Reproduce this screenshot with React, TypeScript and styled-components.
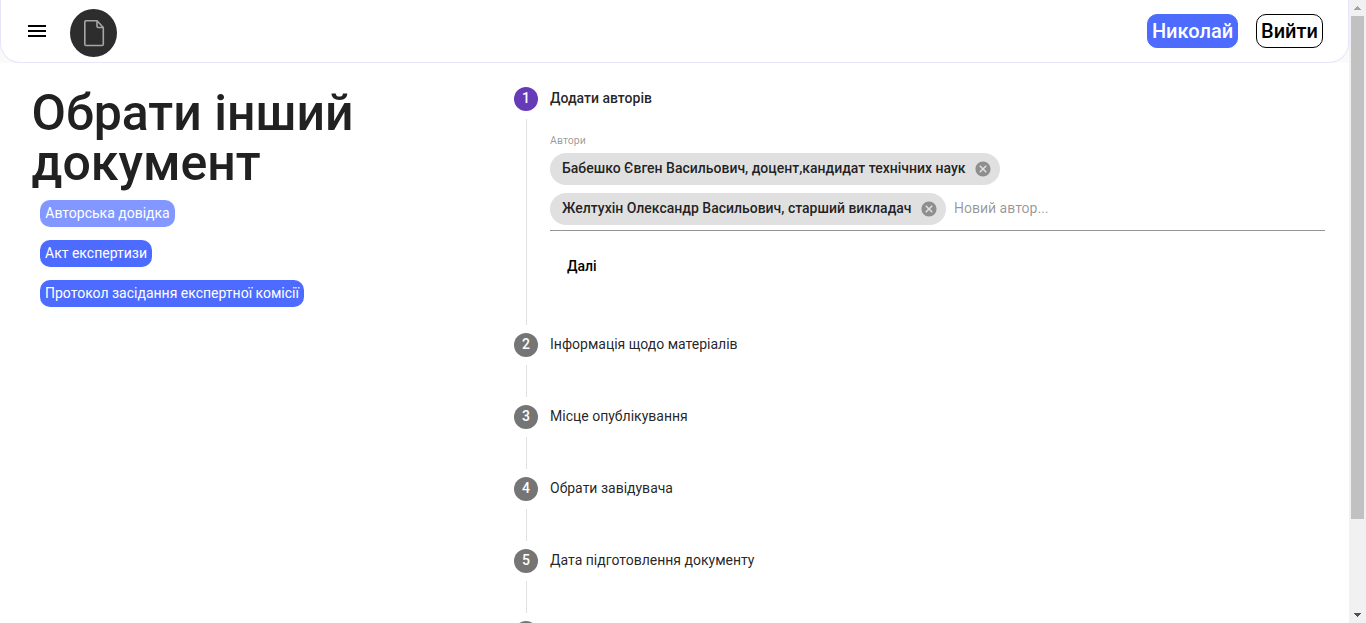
import React from "react";
import styled, { createGlobalStyle } from "styled-components";

const GlobalStyle = createGlobalStyle`
  * { box-sizing: border-box; }
  body {
    margin: 0;
    background: #fff;
    color: rgba(0, 0, 0, 0.87);
    font-family: Roboto, "Liberation Sans", sans-serif;
    overflow: hidden;
  }
  button { font-family: inherit; cursor: pointer; }
`;

const Shell = styled.div`
  display: flex;
  height: 623px;
  overflow: hidden;
`;

const Page = styled.div`
  flex: 1;
  min-width: 0;
`;

const HeaderBand = styled.div`
  height: 63px;
  background: #fafafa;
`;

const Header = styled.header`
  display: flex;
  align-items: flex-start;
  height: 63px;
  padding: 0 25px 0 24px;
  background: #fff;
  border: 1px solid #e6e6fa;
  border-top: 0;
  border-radius: 0 0 20px 20px;
`;

const MenuIcon = styled.svg`
  width: 24px;
  height: 24px;
  margin: 19px 21px 0 0;
`;

const Logo = styled.svg`
  width: 47px;
  height: 48px;
  margin-top: 9px;
`;

const Actions = styled.div`
  display: flex;
  gap: 18px;
  margin: 14px 0 0 auto;
`;

const HeaderButton = styled.button<{ $filled?: boolean; $width: number }>`
  width: ${(p) => p.$width}px;
  height: 34px;
  padding: 0;
  border: 1px solid ${(p) => (p.$filled ? "#4d6bff" : "#000")};
  border-radius: 10px;
  background: ${(p) => (p.$filled ? "#4d6bff" : "#fff")};
  color: ${(p) => (p.$filled ? "#fff" : "#000")};
  font-size: 20px;
  font-weight: 500;
  line-height: 32px;
  white-space: nowrap;
`;

const Content = styled.main`
  display: flex;
`;

const Sidebar = styled.aside`
  width: 490px;
  padding: 25px 32px 0;
`;

const Title = styled.h1`
  width: 350px;
  margin: 0 0 0 -0.5px;
  font-size: 50px;
  font-weight: 500;
  line-height: 50px;
  color: #212121;
`;

const DocList = styled.div`
  display: flex;
  flex-direction: column;
  align-items: flex-start;
  gap: 13px;
  margin: 12px 0 0 8px;
`;

const DocButton = styled.button<{ $selected?: boolean; $width: number }>`
  width: ${(p) => p.$width}px;
  height: 27px;
  padding: 0;
  border: 0;
  border-radius: 10px;
  background: ${(p) => (p.$selected ? "#8297ff" : "#4d6bff")};
  color: #fff;
  font-size: 14px;
  font-weight: 400;
  line-height: 27px;
  white-space: nowrap;
`;

const Stepper = styled.section`
  flex: 1;
  padding: 24px 24px 0;
`;

const Step = styled.div`
  display: flex;
  flex-direction: column;
`;

const StepHeader = styled.div`
  display: flex;
  align-items: center;
  gap: 12px;
  height: 24px;
`;

const StepNumber = styled.div<{ $active?: boolean }>`
  width: 24px;
  height: 24px;
  border-radius: 50%;
  background: ${(p) => (p.$active ? "#673ab7" : "#757575")};
  color: #fff;
  font-size: 14px;
  font-weight: 500;
  line-height: 23px;
  text-align: center;
`;

const StepLabel = styled.div<{ $active?: boolean }>`
  height: 24px;
  font-size: 14px;
  font-weight: ${(p) => (p.$active ? 500 : 400)};
  line-height: 23px;
  white-space: nowrap;
`;

const StepBody = styled.div<{ $height: number }>`
  height: ${(p) => p.$height}px;
  margin: 8px 0 8px 12px;
  padding-left: 23px;
  border-left: 1px solid #e0e0e0;
`;

const Field = styled.div`
  width: 775px;
  height: 112px;
  padding-top: 15px;
  border-bottom: 1px solid #949494;
`;

const FieldLabel = styled.div`
  height: 19px;
  font-size: 10.5px;
  line-height: 13px;
  letter-spacing: 0.05px;
  color: rgba(0, 0, 0, 0.42);
`;

const ChipRows = styled.div`
  display: flex;
  flex-direction: column;
  gap: 8px;
`;

const ChipRow = styled.div`
  display: flex;
  align-items: center;
  gap: 8px;
`;

const Chip = styled.div<{ $width: number }>`
  display: flex;
  align-items: center;
  justify-content: space-between;
  width: ${(p) => p.$width}px;
  height: 32px;
  padding: 0 8px 0 12px;
  border-radius: 16px;
  background: #e0e0e0;
  font-size: 14px;
  font-weight: 500;
  line-height: 30px;
  white-space: nowrap;
`;

const ChipText = styled.span`
  height: 32px;
`;

const RemoveIcon = styled.svg`
  flex: none;
  width: 18px;
  height: 18px;
`;

const Placeholder = styled.span`
  height: 32px;
  font-size: 14px;
  line-height: 30px;
  color: rgba(0, 0, 0, 0.42);
`;

const NextButton = styled.button`
  height: 36px;
  margin: 17px 0 0 1px;
  padding: 0 16px;
  border: 0;
  background: none;
  color: #000;
  font-size: 14px;
  font-weight: 500;
  line-height: 34px;
`;

const Scrollbar = styled.div`
  display: flex;
  flex-direction: column;
  align-items: center;
  width: 17px;
  height: 623px;
  background: #f1f1f1;
`;

const ScrollArrow = styled.svg`
  width: 17px;
  height: 16px;
  flex: none;
`;

const ScrollTrack = styled.div`
  flex: 1;
`;

const ScrollThumb = styled.div`
  width: 13px;
  height: 503px;
  background: #c1c1c1;
`;

const authors = [
  { text: "Бабешко Євген Васильович, доцент,кандидат технічних наук", width: 450 },
  { text: "Желтухін Олександр Васильович, старший викладач", width: 396 },
];

const laterSteps = [
  "Інформація щодо матеріалів",
  "Місце опублікування",
  "Обрати завідувача",
  "Дата підготовлення документу",
];

export default function App() {
  return (
    <Shell>
      <GlobalStyle />
      <Page>
        <HeaderBand>
          <Header>
            <MenuIcon viewBox="0 0 24 24">
              <path d="M3 18h18v-2H3v2zm0-5h18v-2H3v2zm0-7v2h18V6H3z" />
            </MenuIcon>
            <Logo viewBox="0 0 47 48">
              <ellipse cx="23.5" cy="24" rx="23.5" ry="24" fill="#2d2d2d" />
              <g fill="none" stroke="#a6a6a6" strokeWidth="1.6" strokeLinejoin="round">
                <path d="M15.9 11.7H27l6.3 6.8v16.7q0 1.3-1.3 1.3H16q-1.2 0-1.2-1.3V12.9q0-1.2 1.1-1.2z" />
                <path d="M27 11.7v5.5q0 1.3 1.3 1.3h4.9" />
              </g>
            </Logo>
            <Actions>
              <HeaderButton $filled $width={91}>Николай</HeaderButton>
              <HeaderButton $width={67}>Вийти</HeaderButton>
            </Actions>
          </Header>
        </HeaderBand>
        <Content>
          <Sidebar>
            <Title>Обрати інший документ</Title>
            <DocList>
              <DocButton $selected $width={135}>Авторська довідка</DocButton>
              <DocButton $width={112}>Акт експертизи</DocButton>
              <DocButton $width={264}>Протокол засідання експертної комісії</DocButton>
            </DocList>
          </Sidebar>
          <Stepper>
            <Step>
              <StepHeader>
                <StepNumber $active>1</StepNumber>
                <StepLabel $active>Додати авторів</StepLabel>
              </StepHeader>
              <StepBody $height={206}>
                <Field>
                  <FieldLabel>Автори</FieldLabel>
                  <ChipRows>
                    {authors.map((author, i) => (
                      <ChipRow key={author.text}>
                        <Chip $width={author.width}>
                          <ChipText>{author.text}</ChipText>
                          <RemoveIcon viewBox="0 0 24 24" fill="#8e8e8e">
                            <path d="M12 2C6.47 2 2 6.47 2 12s4.47 10 10 10 10-4.47 10-10S17.53 2 12 2zm5 13.59L15.59 17 12 13.41 8.41 17 7 15.59 10.59 12 7 8.41 8.41 7 12 10.59 15.59 7 17 8.41 13.41 12 17 15.59z" />
                          </RemoveIcon>
                        </Chip>
                        {i === authors.length - 1 && <Placeholder>Новий автор...</Placeholder>}
                      </ChipRow>
                    ))}
                  </ChipRows>
                </Field>
                <NextButton>Далі</NextButton>
              </StepBody>
            </Step>
            {laterSteps.map((label, i) => (
              <Step key={label}>
                <StepHeader>
                  <StepNumber>{i + 2}</StepNumber>
                  <StepLabel>{label}</StepLabel>
                </StepHeader>
                <StepBody $height={32} />
              </Step>
            ))}
            <StepHeader>
              <StepNumber />
            </StepHeader>
          </Stepper>
        </Content>
      </Page>
      <Scrollbar>
        <ScrollArrow viewBox="0 0 17 16" shapeRendering="crispEdges">
          <path d="M8 6h1v1h1v1h1v1h1v1H5V9h1V8h1V7h1z" fill="#a3a3a3" />
        </ScrollArrow>
        <ScrollThumb />
        <ScrollTrack />
        <ScrollArrow viewBox="0 0 17 16" shapeRendering="crispEdges">
          <path d="M5 6h7v1h-1v1h-1v1H9v1H8V9H7V8H6V7H5z" fill="#505050" />
        </ScrollArrow>
      </Scrollbar>
    </Shell>
  );
}
